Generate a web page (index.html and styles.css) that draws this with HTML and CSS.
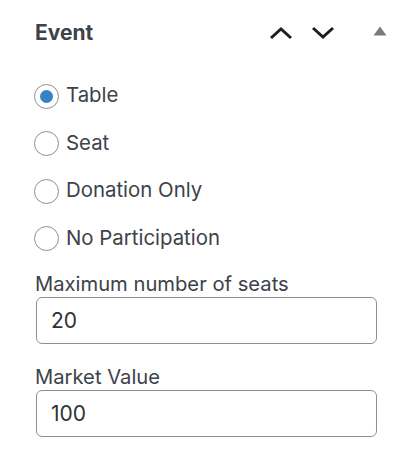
FILE: index.html
```html
<!DOCTYPE html>
<html lang="en">
  <head>
    <meta charset="UTF-8" />
    <meta name="viewport" content="width=device-width, initial-scale=1.0" />
    <title>Event</title>
    <link rel="stylesheet" href="styles.css">
  </head>
  <body>
    <div id="box">
      <div class="box-header">
        <h2 class="box-title">Event</h2>
        <span class="icon up">
          <svg width="24" height="14" viewBox="0 0 24 14"><path d="M2 12 L12 3 L22 12" fill="none" stroke="#1e1e1e" stroke-width="3" /></svg>
        </span>
        <span class="icon down">
          <svg width="24" height="14" viewBox="0 0 24 14"><path d="M2 2 L12 11 L22 2" fill="none" stroke="#1e1e1e" stroke-width="3" /></svg>
        </span>
        <span class="icon toggle">
          <svg width="14" height="10" viewBox="0 0 14 10"><path d="M7 0.5 L13.5 9.5 L0.5 9.5 Z" fill="#787c82" /></svg>
        </span>
      </div>

      <div class="box-inside">
        <div class="choices">
          <label class="choice"><span class="radio checked"></span>Table</label>
          <label class="choice"><span class="radio"></span>Seat</label>
          <label class="choice"><span class="radio"></span>Donation Only</label>
          <label class="choice"><span class="radio"></span>No Participation</label>
        </div>

        <div class="field first">
          <label for="seats">Maximum number of seats</label>
          <input type="text" id="seats" value="20" />
        </div>

        <div class="field">
          <label for="market">Market Value</label>
          <input type="text" id="market" value="100" />
        </div>
      </div>
    </div>
  </body>
</html>
```

FILE: styles.css
```css
* {
  margin: 0px;
  box-sizing: border-box;
}

body {
  background-color: #fff;
  font-family: Inter, "Liberation Sans", sans-serif;
  color: #3c434a;
}

.box-header {
  display: flex;
  align-items: center;
  height: 65px;
  padding-left: 35px;
  padding-right: 23px;
}

.box-title {
  flex: 1;
  font-size: 21px;
  font-weight: 700;
  color: #3c434a;
  line-height: 24px;
}

.icon {
  display: flex;
  align-items: center;
}
.icon.down {
  margin-left: 18px;
}
.icon.toggle {
  margin-left: 38px;
  margin-top: -3px;
}

.box-inside {
  padding-left: 35px;
  padding-right: 33px;
  padding-top: 6px;
}

.choice {
  display: flex;
  align-items: center;
  height: 47.5px;
  font-size: 20.4px;
  color: #3c434a;
}

.radio {
  width: 25px;
  height: 25px;
  border: 1px solid #8c8f94;
  border-radius: 50%;
  margin-right: 7px;
  margin-left: -1px;
  margin-top: 3px;
  display: flex;
  align-items: center;
  justify-content: center;
}
.radio.checked::before {
  content: "";
  width: 13px;
  height: 13px;
  border-radius: 50%;
  background-color: #3582c4;
}

.field.first {
  margin-top: 11px;
}
.field {
  margin-top: 21px;
}
.field label {
  display: block;
  font-size: 20.2px;
  line-height: 24px;
  margin-bottom: 1px;
}
.field input {
  display: block;
  width: calc(100% - 1px);
  margin-left: 1px;
  height: 47px;
  border: 1px solid #8c8f94;
  border-radius: 6px;
  padding: 0px 14px;
  font-family: Inter, "Liberation Sans", sans-serif;
  font-size: 21px;
  color: #2c3338;
  outline: none;
}
```
